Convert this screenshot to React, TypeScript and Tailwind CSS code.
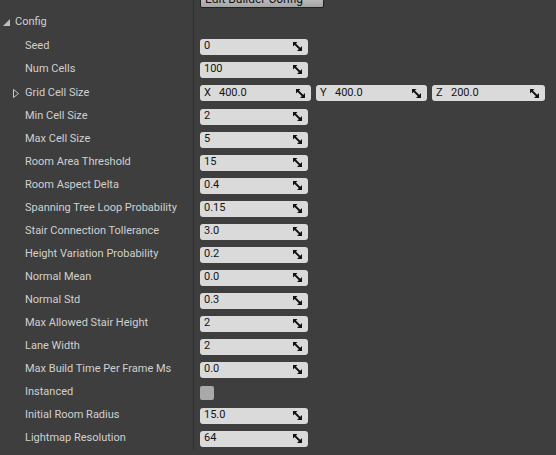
const rows: { label: string; value?: string; kind?: "vec" | "check" }[] = [
  { label: "Seed", value: "0" },
  { label: "Num Cells", value: "100" },
  { label: "Grid Cell Size", kind: "vec" },
  { label: "Min Cell Size", value: "2" },
  { label: "Max Cell Size", value: "5" },
  { label: "Room Area Threshold", value: "15" },
  { label: "Room Aspect Delta", value: "0.4" },
  { label: "Spanning Tree Loop Probability", value: "0.15" },
  { label: "Stair Connection Tollerance", value: "3.0" },
  { label: "Height Variation Probability", value: "0.2" },
  { label: "Normal Mean", value: "0.0" },
  { label: "Normal Std", value: "0.3" },
  { label: "Max Allowed Stair Height", value: "2" },
  { label: "Lane Width", value: "2" },
  { label: "Max Build Time Per Frame Ms", value: "0.0" },
  { label: "Instanced", kind: "check" },
  { label: "Initial Room Radius", value: "15.0" },
  { label: "Lightmap Resolution", value: "64" },
];

function SpinIcon() {
  return (
    <svg width="9" height="9" viewBox="0 0 9 9" className="shrink-0">
      <path d="M0 0 L4.5 0 L0 4.5 Z" fill="#111" />
      <path d="M9 9 L4 9 L9 4 Z" fill="#111" />
      <path d="M1.5 1.5 L7.5 7.5" stroke="#111" strokeWidth="1.8" />
    </svg>
  );
}

function NumBox({ value, axis, width }: { value: string; axis?: string; width: string }) {
  return (
    <div className={`${width} h-[16px] rounded-[3px] bg-[#dadada] flex items-center pl-[4px] pr-[6px] text-[11px] text-[#151515]`}>
      {axis && <span className="w-[15px]">{axis}</span>}
      <span className="flex-1">{value}</span>
      <SpinIcon />
    </div>
  );
}

export default function App() {
  return (
    <div className="w-[556px] h-[455px] overflow-hidden bg-[#3e3e3e] text-[11px] text-[#d0d0d0]" style={{ fontFamily: "Roboto, 'Liberation Sans', sans-serif" }}>
      <div className="flex h-[10px] overflow-hidden">
        <div className="w-[193px]" />
        <div className="w-[1px] bg-[#2e2e2e]" />
        <div className="pl-[6px]">
          <div className="-mt-[9px] h-[17px] w-[124px] rounded-[2px] border border-[#222] bg-gradient-to-b from-[#d0d0d0] to-[#a4a4a4] text-[#111] text-[12px] leading-[15px] px-[4px]">
            Edit Builder Config
          </div>
        </div>
      </div>
      <div className="flex h-[25px] items-center">
        <div className="w-[193px] flex items-center">
          <svg width="7" height="7" viewBox="0 0 7 7" className="ml-[3px] mr-[5px]">
            <path d="M7 0 L7 7 L0 7 Z" fill="#bdbdbd" />
          </svg>
          <span>Config</span>
        </div>
        <div className="w-[1px] h-full bg-[#2e2e2e]" />
      </div>
      {rows.map((r) => (
        <div key={r.label} className={`flex items-center ${r.kind === "vec" ? "h-[24px]" : "h-[23px]"}`}>
          <div className="w-[193px] h-full flex items-center relative pl-[25px]">
            {r.kind === "vec" && (
              <svg width="6" height="9" viewBox="0 0 6 9" className="absolute left-[13px] top-[8px]">
                <path d="M0.5 0.5 L5.5 4.5 L0.5 8.5 Z" fill="none" stroke="#c8c8c8" strokeWidth="1" />
              </svg>
            )}
            <span className="whitespace-nowrap">{r.label}</span>
          </div>
          <div className="w-[1px] h-full bg-[#2e2e2e]" />
          <div className="pl-[6px] flex items-center gap-[5px]">
            {r.kind === "vec" ? (
              <>
                <NumBox axis="X" value="400.0" width="w-[111px]" />
                <NumBox axis="Y" value="400.0" width="w-[111px]" />
                <NumBox axis="Z" value="200.0" width="w-[113px]" />
              </>
            ) : r.kind === "check" ? (
              <div className="w-[14px] h-[14px] rounded-[2px] bg-[#a9a9a9]" />
            ) : (
              <NumBox value={r.value ?? ""} width="w-[108px]" />
            )}
          </div>
        </div>
      ))}
    </div>
  );
}
